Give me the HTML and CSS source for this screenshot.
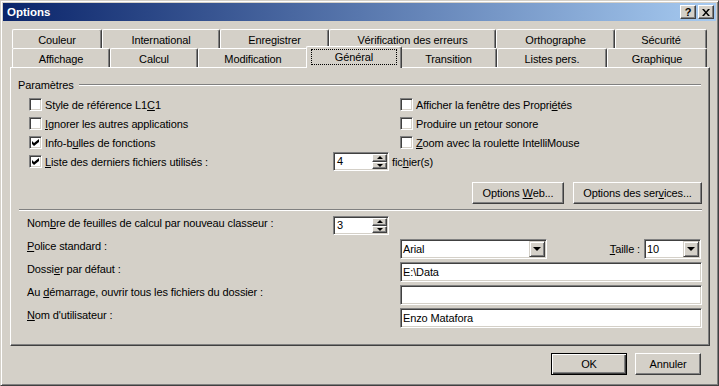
FILE: index.html
```html
<!DOCTYPE html>
<html lang="fr">
<head>
  <meta charset="UTF-8">
  <title>Options</title>
  <link rel="stylesheet" href="styles.css">
</head>
<body>
  <div class="dialog">
    <div class="titlebar">
      <span class="title">Options</span>
      <div class="caption-btns">
        <span class="cap-btn help">?</span>
        <span class="cap-btn">
          <svg width="8" height="7" viewBox="0 0 8 7"><path d="M0 0h2l2 2.5L6 0h2L5 3.5 8 7H6L4 4.5 2 7H0l3-3.5z" fill="#000"/></svg>
        </span>
      </div>
    </div>

    <div class="tabs">
      <div class="tab-row back">
        <div class="tab">Couleur</div>
        <div class="tab">International</div>
        <div class="tab">Enregistrer</div>
        <div class="tab">Vérification des erreurs</div>
        <div class="tab">Orthographe</div>
        <div class="tab">Sécurité</div>
      </div>
      <div class="tab-row front">
        <div class="tab">Affichage</div>
        <div class="tab">Calcul</div>
        <div class="tab">Modification</div>
        <div class="tab active"><span class="focus">Général</span></div>
        <div class="tab">Transition</div>
        <div class="tab">Listes pers.</div>
        <div class="tab">Graphique</div>
      </div>
    </div>

    <div class="panel">
      <div class="group-title">
        <span>Paramètres</span>
        <span class="etched"></span>
      </div>

      <div class="checks">
        <label class="check"><span class="box"></span><span>Style de référence L1<u>C</u>1</span></label>
        <label class="check"><span class="box"></span><span>Afficher la fenêtre des Propri<u>é</u>tés</span></label>
        <label class="check"><span class="box"></span><span><u>I</u>gnorer les autres applications</span></label>
        <label class="check"><span class="box"></span><span>Produire un <u>r</u>etour sonore</span></label>
        <label class="check"><span class="box checked"><svg width="7" height="7" viewBox="0 0 7 7"><path d="M0 2l2 2 5-4v3L2 7 0 5z" fill="#000"/></svg></span><span>Info-b<u>u</u>lles de fonctions</span></label>
        <label class="check"><span class="box"></span><span><u>Z</u>oom avec la roulette IntelliMouse</span></label>
        <div class="recent-row">
          <label class="check recent"><span class="box checked"><svg width="7" height="7" viewBox="0 0 7 7"><path d="M0 2l2 2 5-4v3L2 7 0 5z" fill="#000"/></svg></span><span><u>L</u>iste des derniers fichiers utilisés :</span></label>
          <div class="spinner">
            <span class="spin-value">4</span>
            <span class="spin-btns">
              <span class="spin-btn"><i class="arrow-up"></i></span>
              <span class="spin-btn"><i class="arrow-down"></i></span>
            </span>
          </div>
          <span class="unit">fic<u>h</u>ier(s)</span>
        </div>
      </div>

      <div class="button-row">
        <button class="btn web">Options <u>W</u>eb...</button>
        <button class="btn services">Options des ser<u>v</u>ices...</button>
      </div>

      <div class="separator"></div>

      <div class="fields">
        <span class="field-label">Nom<u>b</u>re de feuilles de calcul par nouveau classeur :</span>
        <div class="spinner">
          <span class="spin-value">3</span>
          <span class="spin-btns">
            <span class="spin-btn"><i class="arrow-up"></i></span>
            <span class="spin-btn"><i class="arrow-down"></i></span>
          </span>
        </div>
        <span class="fill"></span>

        <span class="field-label wide"><u>P</u>olice standard :</span>
        <div class="font-row">
          <div class="combo font"><span class="combo-value">Arial</span><span class="drop"><i class="arrow-down big"></i></span></div>
          <div class="size-group">
            <span><u>T</u>aille :</span>
            <div class="combo size"><span class="combo-value">10</span><span class="drop"><i class="arrow-down big"></i></span></div>
          </div>
        </div>

        <span class="field-label wide">Dossi<u>e</u>r par défaut :</span>
        <div class="textbox">E:\Data</div>

        <span class="field-label wide">Au <u>d</u>émarrage, ouvrir tous les fichiers du dossier :</span>
        <div class="textbox"></div>

        <span class="field-label wide"><u>N</u>om d'utilisateur :</span>
        <div class="textbox">Enzo Matafora</div>
      </div>
    </div>

    <div class="footer">
      <button class="btn default">OK</button>
      <button class="btn cancel">Annuler</button>
    </div>
  </div>
</body>
</html>
```

FILE: styles.css
```css
body {
  margin: 0;
  background: #d4d0c8;
  font-family: Tahoma, 'Liberation Sans', Arial, sans-serif;
  font-size: 11px;
  letter-spacing: -0.12px;
  color: #000;
}

u {
  text-decoration: underline;
  text-underline-offset: 1px;
}

.dialog {
  width: 719px;
  height: 386px;
  box-sizing: border-box;
  background: #d4d0c8;
  border: 1px solid;
  border-color: #d4d0c8 #404040 #404040 #d4d0c8;
  box-shadow: inset 1px 1px #fff, inset -1px -1px #808080;
  padding: 2px;
  display: flex;
  flex-direction: column;
}

/* Titelleiste */
.titlebar {
  height: 18px;
  display: flex;
  align-items: center;
  justify-content: space-between;
  padding: 0 2px 0 4px;
  background: linear-gradient(to right, #0a246a, #a6caf0);
}

.title {
  color: #fff;
  font-weight: bold;
  font-size: 11.5px;
  letter-spacing: 0;
}

.caption-btns {
  display: flex;
  gap: 2px;
}

.cap-btn {
  width: 16px;
  height: 14px;
  box-sizing: border-box;
  background: #d4d0c8;
  border: 1px solid;
  border-color: #fff #404040 #404040 #fff;
  box-shadow: inset -1px -1px #808080;
  display: flex;
  align-items: center;
  justify-content: center;
}

.cap-btn.help {
  font-weight: bold;
  font-size: 11px;
  line-height: 1;
}

/* Registerkarten */
.tabs {
  margin: 8px 0 0 9px;
}

.tab-row {
  display: flex;
  height: 19px;
}

.tab {
  box-sizing: border-box;
  height: 19px;
  border-top: 1px solid #fff;
  border-left: 1px solid #fff;
  border-right: 1px solid #404040;
  border-radius: 2px 2px 0 0;
  box-shadow: inset -1px 0 #808080;
  background: #d4d0c8;
  text-align: center;
  line-height: 17px;
  padding-top: 2px;
  white-space: nowrap;
}

.back .tab:nth-child(1) { width: 90px; }
.back .tab:nth-child(2) { width: 118px; }
.back .tab:nth-child(3) { width: 109px; }
.back .tab:nth-child(4) { width: 167px; }
.back .tab:nth-child(5) { width: 119px; }
.back .tab:nth-child(6) { width: 92px; }

.front .tab:nth-child(1) { width: 98px; }
.front .tab:nth-child(2) { width: 88px; }
.front .tab:nth-child(3) { width: 110px; }
.front .tab:nth-child(4) { width: 96px; }
.front .tab:nth-child(5) { width: 97px; }
.front .tab:nth-child(6) { width: 110px; }
.front .tab:nth-child(7) { width: 100px; }

.tab.active {
  position: relative;
  z-index: 2;
  height: 22px;
  margin: -2px -2px -1px -2px;
  padding: 2px 4px 0;
}

.focus {
  display: block;
  border: 1px dotted #000;
  line-height: 14px;
}

/* Hauptbereich */
.panel {
  margin-left: 7px;
  width: 700px;
  height: 279px;
  box-sizing: border-box;
  border: 1px solid;
  border-color: #fff #404040 #404040 #fff;
  box-shadow: inset -1px -1px #808080;
  padding: 10px 7px 0 8px;
}

.group-title {
  display: flex;
  align-items: center;
  gap: 5px;
  height: 14px;
  margin-left: -1px;
}

.etched {
  flex: 1;
  border-top: 1px solid #808080;
  border-bottom: 1px solid #fff;
  margin-right: 1px;
}

.checks {
  margin-top: 3px;
  display: grid;
  grid-template-columns: 381px 1fr;
  grid-auto-rows: 19px;
}

.check {
  display: flex;
  align-items: center;
  gap: 3px;
  padding-left: 10px;
  white-space: nowrap;
}

.checks > .check:nth-child(even) {
  padding-left: 0;
}

.box {
  width: 13px;
  height: 13px;
  box-sizing: border-box;
  background: #fff;
  border: 1px solid;
  border-color: #808080 #fff #fff #808080;
  box-shadow: inset 1px 1px #404040, inset -1px -1px #d4d0c8;
  display: flex;
  align-items: center;
  justify-content: center;
  flex-shrink: 0;
}

.recent-row {
  grid-column: 1 / -1;
  display: flex;
  align-items: center;
}

.check.recent {
  width: 314px;
  box-sizing: border-box;
}

.unit {
  margin-left: 3px;
}

/* Drehfeld */
.spinner {
  width: 56px;
  height: 19px;
  box-sizing: border-box;
  background: #fff;
  border: 1px solid;
  border-color: #808080 #fff #fff #808080;
  box-shadow: inset 1px 1px #404040, inset -1px -1px #d4d0c8;
  display: flex;
  padding: 1px;
}

.spin-value {
  flex: 1;
  padding-left: 2px;
  line-height: 15px;
}

.spin-btns {
  width: 15px;
  display: flex;
  flex-direction: column;
}

.spin-btn {
  flex: 1;
  box-sizing: border-box;
  background: #d4d0c8;
  border: 1px solid;
  border-color: #fff #404040 #404040 #fff;
  box-shadow: inset -1px -1px #808080;
  display: flex;
  align-items: center;
  justify-content: center;
}

.arrow-up,
.arrow-down {
  width: 0;
  height: 0;
  border-left: 3px solid transparent;
  border-right: 3px solid transparent;
}

.arrow-up {
  border-bottom: 3px solid #000;
}

.arrow-down {
  border-top: 3px solid #000;
}

.arrow-down.big {
  border-left-width: 4px;
  border-right-width: 4px;
  border-top-width: 4px;
}

/* Schaltflächen */
.button-row {
  margin-top: 11px;
  display: flex;
  justify-content: flex-end;
  gap: 9px;
}

.btn {
  height: 22px;
  box-sizing: border-box;
  font: inherit;
  letter-spacing: inherit;
  color: #000;
  background: #d4d0c8;
  border: 1px solid;
  border-color: #fff #404040 #404040 #fff;
  box-shadow: inset -1px -1px #808080;
  padding: 0;
  text-align: center;
}

.btn.web { width: 92px; }
.btn.services { width: 129px; }

.separator {
  margin-top: 5px;
  border-top: 1px solid #808080;
  border-bottom: 1px solid #fff;
}

/* Formularfelder */
.fields {
  margin-top: 3px;
  display: grid;
  grid-template-columns: 314px 67px 1fr;
  grid-auto-rows: 23px;
}

.field-label {
  padding: 3px 0 0 8px;
  line-height: 13px;
  white-space: nowrap;
}

.field-label.wide {
  grid-column: 1 / 3;
}

.fields .spinner {
  align-self: center;
}

.textbox,
.combo {
  align-self: center;
  height: 20px;
  box-sizing: border-box;
  background: #fff;
  border: 1px solid;
  border-color: #808080 #fff #fff #808080;
  box-shadow: inset 1px 1px #404040, inset -1px -1px #d4d0c8;
  padding: 1px 2px;
  line-height: 16px;
}

.font-row {
  display: flex;
  align-items: center;
  justify-content: space-between;
}

.combo {
  display: flex;
  padding-right: 1px;
}

.combo.font { width: 147px; }
.combo.size { width: 57px; }

.combo-value {
  flex: 1;
}

.drop {
  width: 16px;
  height: 16px;
  box-sizing: border-box;
  background: #d4d0c8;
  border: 1px solid;
  border-color: #d4d0c8 #404040 #404040 #d4d0c8;
  box-shadow: inset 1px 1px #fff, inset -1px -1px #808080;
  display: flex;
  align-items: center;
  justify-content: center;
}

.size-group {
  display: flex;
  align-items: center;
  gap: 4px;
  margin-right: 1px;
}

/* Fußzeile */
.footer {
  margin-top: 7px;
  display: flex;
  justify-content: flex-end;
  gap: 8px;
  padding-right: 15px;
}

.btn.default {
  width: 76px;
  border-color: #000;
  box-shadow: inset 1px 1px #fff, inset -1px -1px #404040, inset -2px -2px #808080;
}

.btn.cancel { width: 66px; }
```
